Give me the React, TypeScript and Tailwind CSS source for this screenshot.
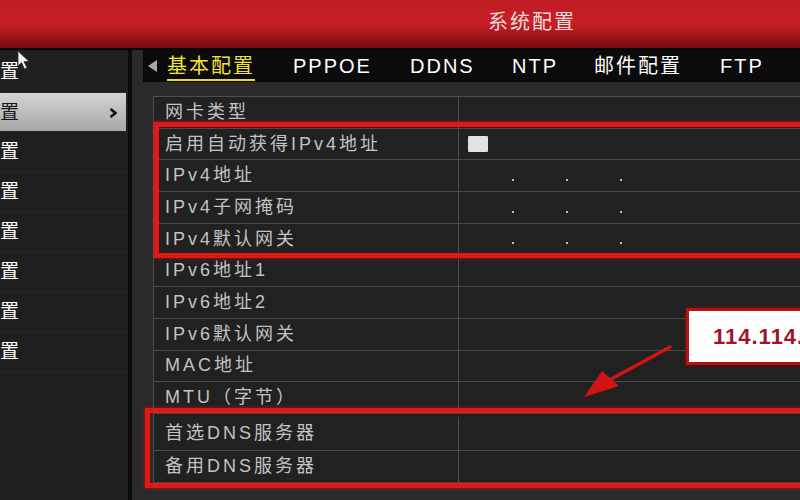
import React from 'react';

const font = "font-['Liberation_Sans','Noto_Sans_CJK_SC',sans-serif]";

const menu = ['常规配置', '网络配置', '报警配置', '串口配置', '预览配置', '异常配置', '用户配置', '热备配置'];

type Row = { label: string; kind?: 'check' | 'ip'; tall?: boolean };

const rows: Row[] = [
  { label: '网卡类型' },
  { label: '启用自动获得IPv4地址', kind: 'check' },
  { label: 'IPv4地址', kind: 'ip' },
  { label: 'IPv4子网掩码', kind: 'ip' },
  { label: 'IPv4默认网关', kind: 'ip' },
  { label: 'IPv6地址1' },
  { label: 'IPv6地址2' },
  { label: 'IPv6默认网关' },
  { label: 'MAC地址' },
  { label: 'MTU（字节）' },
  { label: '首选DNS服务器', tall: true },
  { label: '备用DNS服务器' },
];

function IpDots() {
  return (
    <div className="flex items-end h-full pb-[10px]">
      <span className="ml-[53px] w-[2px] h-[2px] bg-[#bdbdbd]" />
      <span className="ml-[52px] w-[2px] h-[2px] bg-[#bdbdbd]" />
      <span className="ml-[52px] w-[2px] h-[2px] bg-[#bdbdbd]" />
    </div>
  );
}

export default function App() {
  return (
    <div className={`relative w-[800px] h-[500px] overflow-hidden bg-[#1c1c1c] flex flex-col ${font}`}>
      {/* header */}
      <header className="h-[50px] shrink-0 border-b-2 border-[#060606] bg-gradient-to-b from-[#bf1b23] via-[#c71f27] to-[#780b10] flex items-center justify-center pl-[264px] pb-[4px]">
        <span className="text-[20px] tracking-[2px] text-[#f3dcdc]">系统配置</span>
      </header>

      <div className="flex flex-1 min-h-0">
        {/* sidebar */}
        <aside className="w-[128px] shrink-0 bg-[#1f1f1f] flex flex-col">
          {menu.map((m, i) => {
            const active = i === 1;
            return (
              <div
                key={m}
                className={`shrink-0 flex items-center overflow-hidden border-b border-[#272727] pt-[2px] ${i === 0 ? 'h-[43px]' : i === 1 ? 'h-[39px]' : 'h-[40px]'} ${
                  active ? 'w-[126px] bg-gradient-to-b from-[#d4d4d4] to-[#a8a8a8]' : ''
                }`}
              >
                <span className={`ml-[-57px] whitespace-nowrap text-[19px] ${active ? 'text-[#161616]' : 'text-white'}`}>{m}</span>
                {active && (
                  <svg className="ml-auto mr-[9px]" width="8" height="10" viewBox="0 0 8 10">
                    <path d="M1.5 1 L6.5 5 L1.5 9" fill="none" stroke="#111" strokeWidth="2.6" />
                  </svg>
                )}
              </div>
            );
          })}
        </aside>
        <div className="w-[4px] shrink-0 bg-[#0d0d0d]" />

        {/* main */}
        <main className="flex-1 bg-[#2a2a2a] pl-[11px] flex flex-col min-w-0">
          <nav className="h-[32px] shrink-0 bg-[#0b0b0b] flex items-center text-[20px] tracking-[2px] text-white whitespace-nowrap">
            <svg className="ml-[5px] mr-[10px] shrink-0" width="9" height="12" viewBox="0 0 9 12">
              <path d="M9 0 L0 6 L9 12 Z" fill="#a8a8a8" />
            </svg>
            <div className="w-[126px] shrink-0">
              <span className="text-[#f2e33c] border-b-2 border-[#e8d83a] pb-[2px]">基本配置</span>
            </div>
            <div className="w-[117px] shrink-0">PPPOE</div>
            <div className="w-[102px] shrink-0">DDNS</div>
            <div className="w-[82px] shrink-0">NTP</div>
            <div className="w-[126px] shrink-0">邮件配置</div>
            <div className="w-[80px] shrink-0">FTP</div>
          </nav>

          <div className="pl-[10px] pt-[14px] flex-1">
            <div className="w-[700px] bg-[#212121] border-l border-t border-[#4f4f4f]">
              {rows.map((r) => (
                <div key={r.label} className={`flex border-b border-[#4a4a4a] ${r.tall ? 'h-[37px] pt-[3px]' : 'h-[31.7px]'}`}>
                  <div className="w-[305px] shrink-0 border-r border-[#4f4f4f] pl-[11px] flex items-center text-[18px] tracking-[3px] text-[#c3c3c3] whitespace-nowrap">
                    {r.label}
                  </div>
                  <div className="flex-1 flex items-center">
                    {r.kind === 'check' && <span className="ml-[9px] w-[20px] h-[16px] bg-[#e2e2e2] rounded-[1px]" />}
                    {r.kind === 'ip' && <IpDots />}
                  </div>
                </div>
              ))}
            </div>
          </div>
        </main>
      </div>

      {/* annotations */}
      <div className="absolute left-[154px] top-[122px] w-[700px] h-[136px] border-[5px] border-[#e41717] shadow-[0_0_4px_rgba(255,20,20,0.6)]" />
      <div className="absolute left-[145px] top-[408px] w-[700px] h-[80px] border-[5px] border-[#e41717] shadow-[0_0_4px_rgba(255,20,20,0.6)]" />

      <div className="absolute left-[686px] top-[308px] w-[200px] h-[57px] bg-white border-[3px] border-[#b71212] shadow-[0_0_4px_rgba(160,0,0,0.7)] flex items-center overflow-hidden">
        <span className="pl-[24px] text-[22px] font-bold tracking-[1px] text-[#a3122b] whitespace-nowrap">114.114.114.114</span>
      </div>

      <svg className="absolute left-0 top-0 pointer-events-none" width="800" height="500" viewBox="0 0 800 500">
        <path d="M670 347 L604 383" stroke="#d41414" strokeWidth="3.5" strokeLinecap="round" />
        <path d="M584 397 L602 371 L619 386 Z" fill="#d41414" />
        {/* mouse pointer */}
        <path d="M18 51 L18 66 L21.5 62.5 L24.5 69 L27 68 L24 61.5 L29 61.5 Z" fill="#f4f4f4" stroke="#333" strokeWidth="0.8" />
      </svg>
    </div>
  );
}
